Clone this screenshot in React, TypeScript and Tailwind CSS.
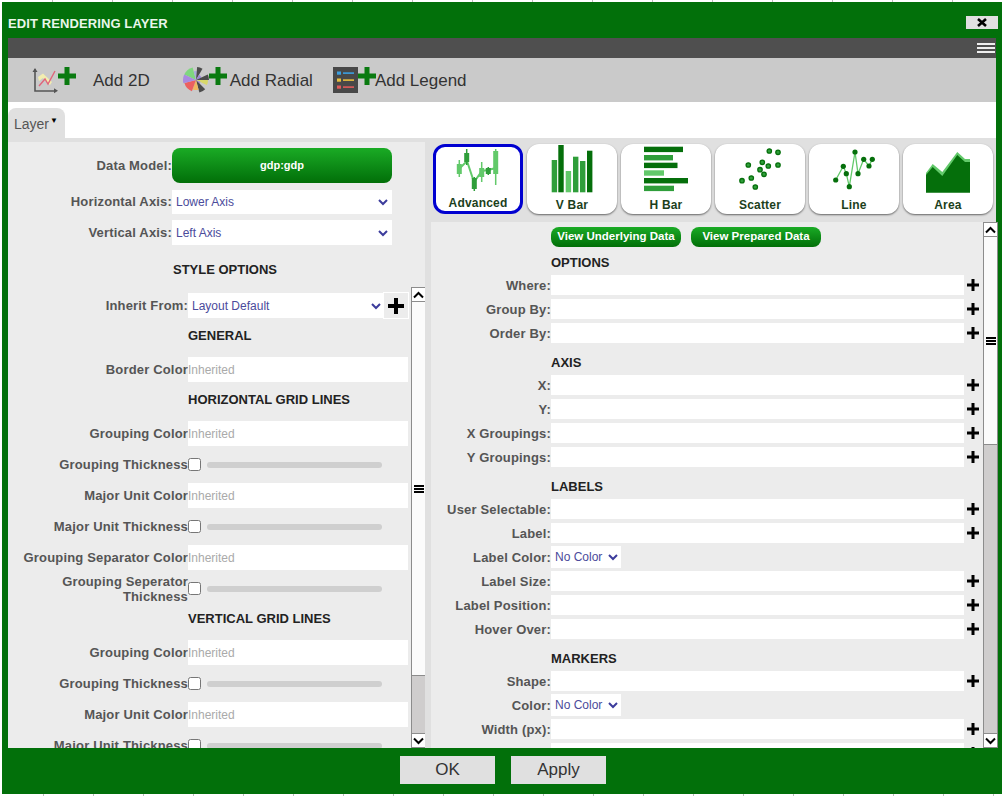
import { ReactNode } from "react";

const TILE_DARK = "#056f0b";
const TILE_MID = "#2f9e3a";
const TILE_LIGHT = "#62c96a";

function PlusIcon({ size, color = "#000", bar }: { size: number; color?: string; bar: number }) {
  const o = (size - bar) / 2;
  return (
    <svg width={size} height={size} viewBox={`0 0 ${size} ${size}`} className="shrink-0">
      <rect x={o} y={0} width={bar} height={size} fill={color} />
      <rect x={0} y={o} width={size} height={bar} fill={color} />
    </svg>
  );
}

function Chevron({ color = "#3c3c9c", size = 10 }: { color?: string; size?: number }) {
  return (
    <svg width={size} height={size} viewBox="0 0 10 10" className="shrink-0">
      <path d="M1 3l4 4 4-4" fill="none" stroke={color} strokeWidth="2" />
    </svg>
  );
}

function Label({ children, className = "" }: { children: ReactNode; className?: string }) {
  return <div className={`shrink-0 text-right text-[13px] leading-[15px] font-bold tracking-[0.17px] text-[#555] ${className}`}>{children}</div>;
}

function Heading({ children, className = "" }: { children: ReactNode; className?: string }) {
  return <div className={`text-[13px] leading-[16px] font-bold text-[#222] ${className}`}>{children}</div>;
}

function SelectBox({ text, className = "" }: { text: string; className?: string }) {
  return (
    <div className={`flex items-center justify-between bg-white pl-1 pr-1 text-[12px] text-[#4b4b9b] ${className}`}>
      <span>{text}</span>
      <Chevron />
    </div>
  );
}

function InheritedRow({ label }: { label: string }) {
  return (
    <div className="flex h-[25px] items-center">
      <Label className="w-[180px]">{label}</Label>
      <div className="flex h-full w-[220px] items-center bg-white text-[12px] text-[#aaa]">Inherited</div>
    </div>
  );
}

function ThicknessRow({ label }: { label: ReactNode }) {
  return (
    <div className="flex h-[37px] items-center">
      <Label className="w-[180px]">{label}</Label>
      <input type="checkbox" className="h-[13px] w-[13px]" readOnly />
      <div className="ml-[6px] h-[6px] w-[175px] rounded-full bg-[#cfcfcf]" />
    </div>
  );
}

function Scrollbar({ thumb, track }: { thumb: number; track: number }) {
  return (
    <div className="flex h-full w-[15px] shrink-0 flex-col border-x border-[#8c8c8c] bg-[#cfcdcd]">
      <div className="flex h-[15px] shrink-0 items-center justify-center border-y border-[#8c8c8c] bg-white">
        <svg width="11" height="8" viewBox="0 0 11 8"><path d="M1 6.5l4.5-4.5 4.5 4.5" fill="none" stroke="#000" strokeWidth="2" /></svg>
      </div>
      <div className="flex shrink-0 flex-col items-center justify-center gap-[1px] border-b border-[#8c8c8c] bg-[#fbfbfb]" style={{ height: thumb }}>
        <div className="h-[2px] w-[10px] bg-black" />
        <div className="h-[2px] w-[10px] bg-black" />
        <div className="h-[2px] w-[10px] bg-black" />
      </div>
      <div className="shrink-0" style={{ height: track }} />
      <div className="flex h-[15px] shrink-0 items-center justify-center border-y border-[#8c8c8c] bg-white">
        <svg width="11" height="8" viewBox="0 0 11 8"><path d="M1 1.5l4.5 4.5 4.5-4.5" fill="none" stroke="#000" strokeWidth="2" /></svg>
      </div>
    </div>
  );
}

function FieldRow({ label, color }: { label: string; color?: boolean }) {
  return (
    <div className="mb-1 flex h-5 items-center">
      <Label className="w-[120px]">{label}</Label>
      {color ? (
        <SelectBox text="No Color" className="h-[22px] w-[70px] !pr-[3px]" />
      ) : (
        <>
          <div className="h-full w-[413px] bg-white" />
          <div className="flex h-[19px] w-[18px] items-center justify-center bg-[#ececec]">
            <PlusIcon size={12} bar={3} />
          </div>
        </>
      )}
    </div>
  );
}

function Section({ title, fields }: { title: string; fields: [string, boolean?][] }) {
  return (
    <>
      <div className="h-7 pt-[8px] pl-[120px]">
        <Heading>{title}</Heading>
      </div>
      {fields.map(([label, color]) => (
        <FieldRow key={label} label={label} color={color} />
      ))}
    </>
  );
}

function AdvancedGlyph() {
  const sticks = [
    [26.3, 16, 33, 20, 30, TILE_LIGHT],
    [33.7, 5, 21, 9, 18, TILE_MID],
    [41.3, 33, 47, 34, 45, TILE_MID],
    [48.7, 18, 38, 24, 33, TILE_LIGHT],
    [55.3, 23, 31, 24, 30, TILE_MID],
    [62.7, 5, 41, 7, 30, TILE_LIGHT],
  ] as const;
  return (
    <>
      <polyline points="26,25 34,17 41,38 49,27 55,26 63,24" fill="none" stroke={TILE_LIGHT} strokeWidth="2" />
      {sticks.map(([x, y0, y1, b0, b1, c]) => (
        <g key={x} fill={c}>
          <rect x={x - 0.75} y={y0} width="1.5" height={y1 - y0} />
          <rect x={x - 2.5} y={b0} width="5" height={b1 - b0} />
        </g>
      ))}
    </>
  );
}

function VBarGlyph() {
  const bars = [[24.7, 16, TILE_MID], [31.3, 1, TILE_DARK], [38.7, 27, TILE_LIGHT], [46, 12.7, TILE_MID], [53, 17, TILE_MID], [60, 6.7, TILE_DARK]] as const;
  return (
    <>
      {bars.map(([x, y, c]) => (
        <rect key={x} x={x} y={y} width="5.4" height={48.3 - y} fill={c} />
      ))}
    </>
  );
}

function HBarGlyph() {
  const bars = [[2.7, 39, TILE_DARK], [11, 29, TILE_MID], [18.7, 33.5, TILE_DARK], [26.3, 20, TILE_LIGHT], [34, 44, TILE_DARK], [41.7, 30, TILE_MID]] as const;
  return (
    <>
      {bars.map(([y, w, c]) => (
        <rect key={y} x="23" y={y} width={w} height="5.4" fill={c} />
      ))}
    </>
  );
}

function ScatterGlyph() {
  const pts = [[54.3, 7], [63, 8.3], [33.3, 21], [47.3, 18.3], [53.3, 22], [63, 21], [45, 25.7], [49, 30.3], [36.3, 34], [27, 36.7], [40.3, 43]];
  return (
    <>
      {pts.map(([x, y]) => (
        <circle key={`${x}-${y}`} cx={x} cy={y} r="2.2" fill={TILE_MID} stroke={TILE_DARK} strokeWidth="1.3" />
      ))}
    </>
  );
}

function LineGlyph() {
  const pts = [[26.7, 36], [34.3, 22.3], [37.3, 29.7], [40.3, 42.7], [46, 8], [49, 29.7], [54.7, 15.3], [60, 22], [63.3, 15.3]];
  return (
    <>
      <polyline points={pts.map((p) => p.join(",")).join(" ")} fill="none" stroke={TILE_LIGHT} strokeWidth="1.3" />
      {pts.map(([x, y]) => (
        <circle key={x} cx={x} cy={y} r="2.6" fill={TILE_DARK} />
      ))}
    </>
  );
}

function AreaGlyph() {
  return (
    <>
      <polygon points="23,29 29.7,20 39.3,28 54.3,8 62,15 67,15 67,30 23,40" fill={TILE_LIGHT} />
      <polygon points="23,48.7 23,31 29.7,23 39.3,32 54.3,11 62,18 67,18 67,48.7" fill={TILE_DARK} />
    </>
  );
}

const TILES = [
  { name: "Advanced", glyph: <AdvancedGlyph />, active: true },
  { name: "V Bar", glyph: <VBarGlyph /> },
  { name: "H Bar", glyph: <HBarGlyph /> },
  { name: "Scatter", glyph: <ScatterGlyph /> },
  { name: "Line", glyph: <LineGlyph /> },
  { name: "Area", glyph: <AreaGlyph /> },
];

function ChartTile({ name, glyph, active }: { name: string; glyph: ReactNode; active?: boolean }) {
  return (
    <div className={`flex h-[70px] w-[90px] flex-col items-center rounded-[12px] bg-white ${active ? "border-[3px] border-[#0000d0]" : "shadow-[0_1px_2px_rgba(0,0,0,0.55)]"}`}>
      <svg width="90" height="50" viewBox="0 0 90 50" className={`shrink-0 ${active ? "-mx-[3px] -mt-[3px]" : ""}`}>
        {glyph}
      </svg>
      <span className={`text-[12px] leading-[14px] font-bold tracking-[0.2px] text-[#1c3f1c] ${active ? "mt-[2px]" : "mt-[4px]"}`}>{name}</span>
    </div>
  );
}

function Add2DIcon() {
  return (
    <svg width="30" height="30" viewBox="0 0 30 30" className="shrink-0">
      <polygon points="8,12 13,8.5 22,17 20,20 13,13 9,16" fill="#f3eeb0" />
      <polyline points="9,21 15,14 18,19 25,6" fill="none" stroke="#e0657b" strokeWidth="1.4" />
      <path d="M5 4v22h21" fill="none" stroke="#555" strokeWidth="1.6" />
      <path d="M2.5 7L5 3l2.5 4zM24 23.2l4 2.5-4 2.5z" fill="#555" />
    </svg>
  );
}

function wedge(a0: number, a1: number, r: number) {
  const p = (a: number) => `${13 + r * Math.cos((a * Math.PI) / 180)} ${13 + r * Math.sin((a * Math.PI) / 180)}`;
  return `M13 13L${p(a0)}A${r} ${r} 0 0 1 ${p(a1)}Z`;
}

function RadialIcon() {
  const parts: [number, number, number, string][] = [
    [-155, -105, 13, "#7fd67f"],
    [-105, -85, 9, "#a9a9e0"],
    [-85, -60, 13, "#4c4c4c"],
    [-60, -25, 6, "#9d86d8"],
    [-25, 0, 13, "#4c4c4c"],
    [0, 25, 12, "#d8d86a"],
    [25, 45, 5, "#a98ae0"],
    [45, 75, 13, "#4c4c4c"],
    [75, 110, 10, "#f0b860"],
    [110, 165, 12, "#ec6060"],
    [165, 205, 13, "#a98ae0"],
  ];
  return (
    <svg width="26" height="26" viewBox="0 0 26 26" className="shrink-0">
      {parts.map(([a, b, r, c]) => (
        <path key={a} d={wedge(a, b, r)} fill={c} />
      ))}
    </svg>
  );
}

function LegendIcon() {
  const rows: [number, string][] = [[6, "#3b9fe0"], [13, "#e8bf3f"], [20, "#e05a5a"]];
  return (
    <svg width="25" height="26" viewBox="0 0 25 26" className="shrink-0">
      <rect width="25" height="26" fill="#484848" />
      {rows.map(([y, c]) => (
        <g key={y} fill={c}>
          <rect x="4" y={y - 1.5} width="4" height="3.2" />
          <rect x="10" y={y - 0.7} width="11" height="1.6" />
        </g>
      ))}
    </svg>
  );
}

const DIALOG_BTN = "flex h-7 w-[95px] items-center justify-center bg-[#e0e0e0] text-[17px] text-[#333]";
const VIEW_BTN =
  "flex h-5 w-[130px] items-center justify-center rounded-lg bg-gradient-to-b from-[#1aab25] to-[#026f08] text-[11.5px] font-bold text-white";

export default function App() {
  return (
    <div className="flex h-[796px] w-[1004px] flex-col overflow-hidden bg-white font-['Liberation_Sans',Arial,sans-serif]">
      <div className="h-[2px] shrink-0 bg-[repeating-linear-gradient(90deg,transparent_0,transparent_52px,#bbb_52px,#bbb_53px,transparent_53px,transparent_60px)]" />
      <div className="mx-[2px] flex h-[792px] flex-col bg-[#02700a]">
        <div className="flex h-9 shrink-0 items-center justify-between pr-1 pl-[6px] pt-[8px]">
          <span className="text-[13px] font-bold tracking-[0.1px] text-[#eaf6ea]">EDIT RENDERING LAYER</span>
          <div className="mb-[4px] flex h-[13px] w-[32px] items-center justify-center bg-[#e0e0e0]">
            <svg width="12" height="9" viewBox="0 0 12 9"><path d="M2 1l8 7M10 1l-8 7" stroke="#000" strokeWidth="2.6" /></svg>
          </div>
        </div>
        <div className="mx-[6px] flex flex-col">
          <div className="flex h-5 items-center justify-end bg-[#4f4f4f] pr-[1px]">
            <div className="flex flex-col gap-[2px]">
              <div className="h-[2px] w-[18px] bg-[#eee]" />
              <div className="h-[2px] w-[18px] bg-[#eee]" />
              <div className="h-[2px] w-[18px] bg-[#eee]" />
            </div>
          </div>
          <div className="flex h-11 items-center bg-[#cacaca] pl-[22px] text-[17px] text-[#333]">
            <Add2DIcon />
            <div className="-mt-[8px] -ml-[2px]"><PlusIcon size={18} bar={5} color="#0a7a10" /></div>
            <span className="ml-[17px] pt-[2px]">Add 2D</span>
            <div className="ml-[33px]"><RadialIcon /></div>
            <div className="-mt-[8px]"><PlusIcon size={18} bar={5} color="#0a7a10" /></div>
            <span className="ml-[3px] pt-[2px]">Add Radial</span>
            <div className="ml-5"><LegendIcon /></div>
            <div className="-mt-[8px]"><PlusIcon size={18} bar={5} color="#0a7a10" /></div>
            <span className="-ml-px pt-[2px]">Add Legend</span>
          </div>
          <div className="flex h-9 items-end bg-white">
            <div className="flex h-[30px] w-[57px] rounded-t-lg bg-[#e0e0e0] pl-[6px] pt-[7px] text-[14px] leading-[18px] text-[#555]">
              Layer<span className="mt-[-3px] ml-[1px] text-[8px] text-black">▼</span>
            </div>
          </div>
          <div className="flex h-[610px] bg-[#e0e0e0]">
            <div className="mt-1 flex w-[417px] flex-col bg-[#ececec]">
              <div className="flex h-[35px] mt-[6px] shrink-0 items-center">
                <Label className="w-[164px]">Data Model:</Label>
                <div className="flex h-full w-[220px] items-center justify-center rounded-lg bg-gradient-to-b from-[#1aab25] to-[#026f08] text-[11px] font-bold text-white">gdp:gdp</div>
              </div>
              <div className="mt-[7px] flex h-6 shrink-0 items-center">
                <Label className="w-[164px] -mt-[2px]">Horizontal Axis:</Label>
                <SelectBox text="Lower Axis" className="h-full w-[220px]" />
              </div>
              <div className="mt-[6px] flex h-[25px] shrink-0 items-center">
                <Label className="w-[164px]">Vertical Axis:</Label>
                <SelectBox text="Left Axis" className="h-full w-[220px]" />
              </div>
              <div className="mt-[17px] shrink-0 pl-[165px]"><Heading>STYLE OPTIONS</Heading></div>
              <div className="mt-[9px] flex h-[461px] overflow-hidden">
                <div className="w-[403px] shrink-0 overflow-hidden pt-[6px]">
                  <div className="flex h-[25px] items-center">
                    <Label className="w-[180px]">Inherit From:</Label>
                    <SelectBox text="Layout Default" className="h-full w-[196px] !pr-[3px]" />
                    <div className="flex h-full w-6 items-center justify-center bg-[#ececec] outline outline-white">
                      <PlusIcon size={16} bar={4} />
                    </div>
                  </div>
                  <div className="h-[39px] pt-[10px] pl-[180px]"><Heading>GENERAL</Heading></div>
                  <InheritedRow label="Border Color" />
                  <div className="h-[39px] pt-[10px] pl-[180px]"><Heading>HORIZONTAL GRID LINES</Heading></div>
                  <InheritedRow label="Grouping Color" />
                  <ThicknessRow label="Grouping Thickness" />
                  <InheritedRow label="Major Unit Color" />
                  <ThicknessRow label="Major Unit Thickness" />
                  <InheritedRow label="Grouping Separator Color" />
                  <ThicknessRow label={<>Grouping Seperator<br />Thickness</>} />
                  <div className="h-[33px] pt-[4px] pl-[180px]"><Heading>VERTICAL GRID LINES</Heading></div>
                  <InheritedRow label="Grouping Color" />
                  <ThicknessRow label="Grouping Thickness" />
                  <InheritedRow label="Major Unit Color" />
                  <ThicknessRow label="Major Unit Thickness" />
                </div>
                <Scrollbar thumb={374} track={57} />
              </div>
            </div>
            <div className="ml-[6px] flex w-[567px] flex-col">
              <div className="flex h-[84px] shrink-0 gap-1 pl-[2px] pt-[6px]">
                {TILES.map((t) => (
                  <ChartTile key={t.name} name={t.name} glyph={t.glyph} active={t.active} />
                ))}
              </div>
              <div className="flex h-[526px] bg-[#ececec]">
                <div className="h-full w-[552px] shrink-0 overflow-hidden pt-[5px]">
                  <div className="flex gap-[10px] pl-[120px]">
                    <div className={VIEW_BTN}>View Underlying Data</div>
                    <div className={VIEW_BTN}>View Prepared Data</div>
                  </div>
                  <Section title="OPTIONS" fields={[["Where:"], ["Group By:"], ["Order By:"]]} />
                  <Section title="AXIS" fields={[["X:"], ["Y:"], ["X Groupings:"], ["Y Groupings:"]]} />
                  <Section
                    title="LABELS"
                    fields={[["User Selectable:"], ["Label:"], ["Label Color:", true], ["Label Size:"], ["Label Position:"], ["Hover Over:"]]}
                  />
                  <Section title="MARKERS" fields={[["Shape:"], ["Color:", true], ["Width (px):"], [""]]} />
                </div>
                <Scrollbar thumb={208} track={288} />
              </div>
            </div>
          </div>
        </div>
        <div className="flex flex-1 items-start justify-center gap-4 pt-2 pl-[2px]">
          <div className={DIALOG_BTN}>OK</div>
          <div className={DIALOG_BTN}>Apply</div>
        </div>
      </div>
      <div className="h-[2px] shrink-0 bg-[repeating-linear-gradient(90deg,transparent_0,transparent_43px,#bbb_43px,#bbb_44px,transparent_44px,transparent_50px)]" />
    </div>
  );
}
